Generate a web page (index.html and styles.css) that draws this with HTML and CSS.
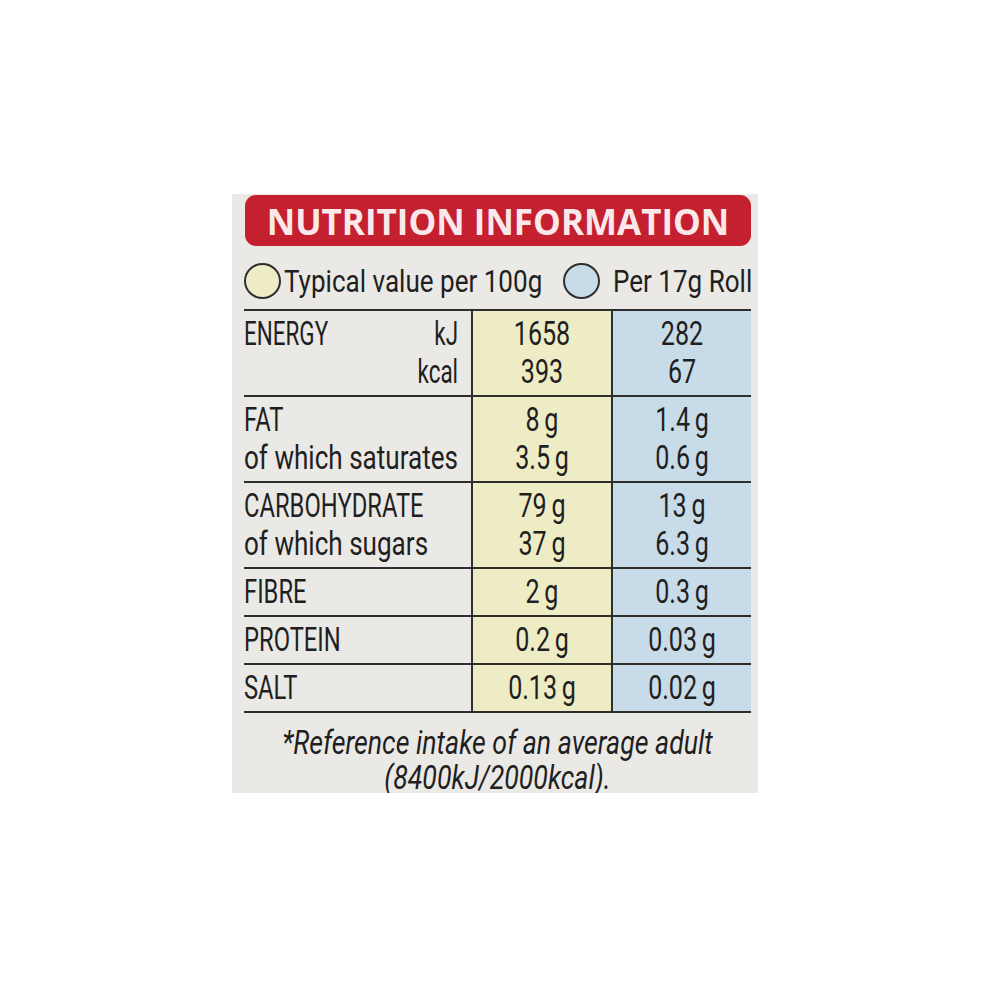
FILE: index.html
```html
<!DOCTYPE html>
<html lang="en">
<head>
<meta charset="utf-8">
<title>Nutrition Information</title>
<link rel="stylesheet" href="styles.css">
</head>
<body>
<div class="panel">
  <div class="banner">NUTRITION INFORMATION</div>
  <div class="legend">
    <span class="dot dot-y"></span>
    <div class="lg-text lg-1"><div class="sq">Typical value per 100g</div></div>
    <span class="dot dot-b"></span>
    <div class="lg-text lg-2"><div class="sq">Per 17g Roll</div></div>
  </div>
  <div class="table">
    <div class="row">
      <div class="cell lbl"><div class="sq en split"><div>ENERGY</div><div class="unit">kJ<br>kcal</div></div></div>
      <div class="cell y"><div class="sq val">1658<br>393</div></div>
      <div class="cell b"><div class="sq val">282<br>67</div></div>
    </div>
    <div class="row">
      <div class="cell lbl"><div class="sq cap">FAT</div><div class="sq lc">of which saturates</div></div>
      <div class="cell y"><div class="sq val">8 g<br>3.5 g</div></div>
      <div class="cell b"><div class="sq val">1.4 g<br>0.6 g</div></div>
    </div>
    <div class="row">
      <div class="cell lbl"><div class="sq cap">CARBOHYDRATE</div><div class="sq lc">of which sugars</div></div>
      <div class="cell y"><div class="sq val">79 g<br>37 g</div></div>
      <div class="cell b"><div class="sq val">13 g<br>6.3 g</div></div>
    </div>
    <div class="row">
      <div class="cell lbl"><div class="sq cap">FIBRE</div></div>
      <div class="cell y"><div class="sq val">2 g</div></div>
      <div class="cell b"><div class="sq val">0.3 g</div></div>
    </div>
    <div class="row">
      <div class="cell lbl"><div class="sq cap">PROTEIN</div></div>
      <div class="cell y"><div class="sq val">0.2 g</div></div>
      <div class="cell b"><div class="sq val">0.03 g</div></div>
    </div>
    <div class="row">
      <div class="cell lbl"><div class="sq cap">SALT</div></div>
      <div class="cell y"><div class="sq val">0.13 g</div></div>
      <div class="cell b"><div class="sq val">0.02 g</div></div>
    </div>
  </div>
  <div class="note"><div class="sq">*Reference intake of an average adult<br>(8400kJ/2000kcal).</div></div>
</div>
</body>
</html>
```
FILE: styles.css
```css
html, body {
  margin: 0;
  padding: 0;
  background: #ffffff;
}

.panel {
  margin: 194px 0 0 232px;
  width: 526px;
  height: 599px;
  box-sizing: border-box;
  padding: 1px 7px 0 12px;
  background: #eae9e5;
  color: #1f1f1f;
  font-family: Roboto, "Liberation Sans", sans-serif;
  font-weight: 400;
}

/* condensed text: laid out at natural width, then squeezed horizontally */
.sq {
  --s: 0.68;
  box-sizing: border-box;
  width: calc(100% / var(--s));
  transform: scaleX(var(--s));
  transform-origin: 0 0;
  white-space: nowrap;
}

.banner {
  margin-left: 1px;
  height: 51px;
  box-sizing: border-box;
  padding-top: 3px;
  line-height: 48px;
  background: #c4202f;
  border-radius: 11px;
  color: #fbe8ea;
  font-family: "Open Sans", "Liberation Sans", sans-serif;
  font-weight: 700;
  font-size: 35px;
  text-align: center;
  white-space: nowrap;
}

.legend {
  display: flex;
  align-items: flex-start;
  height: 63px;
  box-sizing: border-box;
  padding-top: 17px;
  font-size: 31px;
  line-height: 38px;
}

.legend .sq { --s: 0.84; }

.dot {
  flex: none;
  width: 33px;
  height: 32px;
  border: 2.5px solid #2e2e2e;
  border-radius: 50%;
}

.dot-y { background: #eeecc4; }
.dot-b { background: #c8dbe8; margin-left: 17px; }

.lg-text { flex: none; }
.lg-1 { width: 262px; margin-left: 3px; }
.lg-2 { width: 140px; margin-left: 13px; }

.table {
  border-top: 2px solid #2e2e2e;
}

.row {
  display: grid;
  grid-template-columns: 227px 140px 140px;
  border-bottom: 2px solid #2e2e2e;
  font-size: 33px;
  line-height: 38px;
}

.cell {
  padding: 4px 0;
}

.lbl .sq.en {
  padding-right: 19px;
}

.sq.cap { --s: 0.72; }
.sq.lc { --s: 0.79; }
.sq.val { --s: 0.76; word-spacing: -2px; }

.split {
  display: flex;
  justify-content: space-between;
}

.unit {
  text-align: right;
}

.y {
  background: #eeecc4;
  border-left: 2px solid #2e2e2e;
  text-align: center;
}

.b {
  background: #c8dbe8;
  border-left: 2px solid #2e2e2e;
  text-align: center;
}

.note {
  margin-top: 12px;
  font-style: italic;
  font-size: 33px;
  line-height: 35px;
  text-align: center;
}

.note .sq { --s: 0.81; }
```
